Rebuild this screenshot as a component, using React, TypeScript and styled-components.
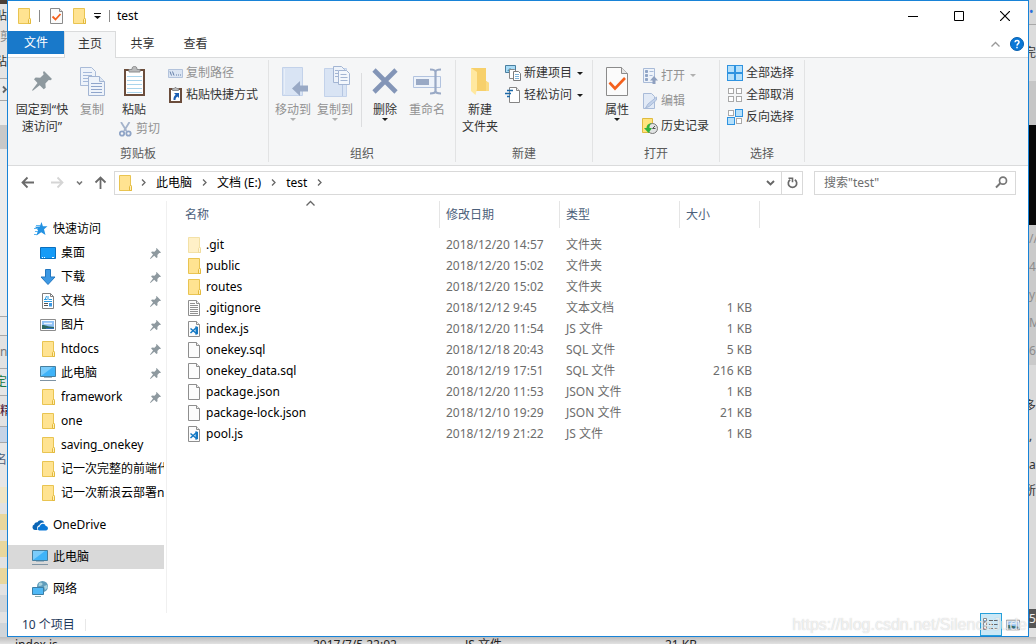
import React from "react";
import styled, { createGlobalStyle } from "styled-components";

const GlobalStyle = createGlobalStyle`
  *, *::before, *::after { box-sizing: border-box; }
  body {
    margin: 0;
    background: #e2e2e2;
    font: 12px/16px "Noto Sans", "Noto Sans CJK SC", sans-serif;
    color: #000;
  }
  button, input {
    font: inherit;
    color: inherit;
    background: none;
    border: 0;
    padding: 0;
    margin: 0;
    border-radius: 0;
  }
  button { white-space: nowrap; }
  svg { display: block; flex: none; }
  ul, ol { list-style: none; margin: 0; padding: 0; }
`;

/* ---------- desktop and the slivers of windows behind ---------- */

const Desktop = styled.div`
  display: grid;
  grid-template-columns: 7px minmax(0, 1fr) 7px;
  grid-template-rows: 1fr 7px;
  min-height: 100vh;
`;

const Sliver = styled.div`
  display: flex;
  flex-direction: column;
  overflow: hidden;
  contain: size;
  background: #e2e2e2;
`;

const Slice = styled.div<{ $h: number; $bg: string; $fg?: string; $line?: boolean; $end?: boolean }>`
  flex: none;
  display: flex;
  align-items: center;
  justify-content: ${(p) => (p.$end ? "flex-end" : "flex-start")};
  height: ${(p) => p.$h}px;
  overflow: hidden;
  white-space: nowrap;
  background: ${(p) => p.$bg};
  color: ${(p) => p.$fg ?? "#333"};
  border-bottom: ${(p) => (p.$line ? "1px solid #a8a8a8" : "0")};
`;

const BottomSliver = styled.div`
  grid-column: 1 / -1;
  display: grid;
  grid-template-columns: 298px 152px 200px 1fr;
  align-items: end;
  padding: 0 15px 3px;
  height: 7px;
  overflow: hidden;
  color: #222;
  background: linear-gradient(#bdbdbd, #e2e2e2);
`;

/* ---------- window frame ---------- */

const Window = styled.main`
  position: relative;
  display: flex;
  flex-direction: column;
  min-width: 0;
  border: 1px solid #1883d7;
  background: #fff;
`;

const TitleBar = styled.header`
  display: flex;
  align-items: center;
  height: 30px;
  padding-left: 10px;
`;

const QuickTools = styled.div`
  display: flex;
  align-items: center;
  gap: 8px;
`;

const QuickSlot = styled.span`
  display: flex;
  justify-content: center;
  width: 17px;
`;

const Bar = styled.span`
  width: 1px;
  height: 12px;
  background: #8a8a8a;
`;

const Title = styled.h1`
  margin: 0 0 0 7px;
  font-size: 12px;
  font-weight: 400;
  line-height: 16px;
`;

const CaptionButtons = styled.div`
  display: flex;
  margin-left: auto;
`;

const CaptionButton = styled.button`
  display: flex;
  align-items: center;
  justify-content: center;
  width: 46px;
  height: 30px;
`;

const TabRow = styled.nav`
  display: flex;
  align-items: flex-start;
  height: 27px;
  border-bottom: 1px solid #dadbdc;
`;

const Tab = styled.button<{ $kind?: "file" | "active" }>`
  width: ${(p) => (p.$kind === "file" ? 56 : p.$kind === "active" ? 52 : 53)}px;
  height: ${(p) => (p.$kind === "file" ? 23 : 27)}px;
  padding-bottom: ${(p) => (p.$kind === "file" ? 0 : 2)}px;
  color: ${(p) => (p.$kind === "file" ? "#fff" : "#333")};
  background: ${(p) => (p.$kind === "file" ? "#1979ca" : p.$kind === "active" ? "#f5f6f7" : "transparent")};
  border: solid #dadbdc;
  border-width: ${(p) => (p.$kind === "active" ? "1px 1px 0" : "0")};
`;

const TabTools = styled.div`
  display: flex;
  align-items: center;
  gap: 10px;
  height: 26px;
  margin-left: auto;
  padding-right: 4px;
`;

/* ---------- ribbon ---------- */

const Ribbon = styled.section`
  display: flex;
  flex: none;
  height: 108px;
  padding: 2px 0 3px;
  overflow: hidden;
  background: #f5f6f7;
  border-bottom: 1px solid #dadbdc;
`;

const Group = styled.section<{ $w: number }>`
  display: flex;
  flex: none;
  flex-direction: column;
  width: ${(p) => p.$w}px;
  border-right: 1px solid #e2e3e4;
`;

const GroupBody = styled.div<{ $pad?: number }>`
  display: flex;
  flex: 1;
  padding-left: ${(p) => p.$pad ?? 0}px;
`;

const GroupLabel = styled.h2`
  margin: 0;
  font-size: 12px;
  font-weight: 400;
  line-height: 16px;
  text-align: center;
  color: #5a5a5a;
`;

const Column = styled.div<{ $pad?: number; $top?: number }>`
  display: flex;
  flex-direction: column;
  align-items: flex-start;
  padding: ${(p) => p.$top ?? 2}px 0 0 ${(p) => p.$pad ?? 0}px;
`;

const BigButton = styled.button<{ $w: number }>`
  display: flex;
  flex-direction: column;
  align-items: center;
  align-self: flex-start;
  width: ${(p) => p.$w}px;
  padding-top: 4px;
  line-height: 17px;
  text-align: center;
  white-space: pre-line;
  color: #333;
  &:disabled { color: #929292; }
`;

const IconBox = styled.span`
  display: flex;
  align-items: center;
  justify-content: center;
  height: 34px;
  margin-bottom: 3px;
`;

const SmallButton = styled.button<{ $h: number }>`
  display: flex;
  align-items: center;
  gap: 3px;
  height: ${(p) => p.$h}px;
  color: #333;
  &:disabled { color: #929292; }
`;

const SmallIcon = styled.span`
  display: flex;
  justify-content: center;
  width: 16px;
`;

const CutRow = styled.div`
  padding-left: 5px;
  height: 22px;
`;

const InnerRule = styled.span`
  width: 1px;
  height: 54px;
  margin: 13px 4px 0 5px;
  background: #dcdddf;
`;

const Caret = styled.span<{ $pale?: boolean }>`
  width: 0;
  height: 0;
  margin: 0 2px;
  border: solid transparent;
  border-width: 3px 3px 0;
  border-top-color: ${(p) => (p.$pale ? "#b0b0b0" : "#1a1a1a")};
`;

/* ---------- address row ---------- */

const AddressRow = styled.div`
  display: flex;
  align-items: center;
  flex: none;
  height: 35px;
  padding: 0 12px 2px 13px;
`;

const NavButtons = styled.div`
  display: grid;
  grid-template-columns: 30px 25px 18px 20px;
  width: 93px;
  align-items: center;
`;

const AddressBox = styled.div`
  display: flex;
  flex: 1;
  align-items: center;
  min-width: 0;
  height: 24px;
  padding-left: 4px;
  border: 1px solid #d9d9d9;
`;

const Crumbs = styled.ol`
  display: flex;
  align-items: center;
  margin-right: auto;
  padding-left: 7px;
  white-space: nowrap;
  li { display: flex; align-items: center; gap: 8px; margin-right: 8px; }
`;

const BoxButton = styled.button<{ $rule?: boolean }>`
  display: flex;
  align-items: center;
  justify-content: center;
  width: 21px;
  height: 22px;
  border-left: ${(p) => (p.$rule ? "1px solid #d9d9d9" : "0")};
`;

const SearchBox = styled.label`
  display: flex;
  align-items: center;
  width: 202px;
  height: 24px;
  margin-left: 11px;
  padding: 0 7px 0 9px;
  border: 1px solid #d9d9d9;
  input { flex: 1; min-width: 0; outline: 0; }
  input::placeholder { color: #6d6d6d; opacity: 1; }
`;

/* ---------- content ---------- */

const Content = styled.div`
  display: grid;
  flex: 1;
  grid-template-columns: 159px minmax(0, 1fr);
`;

const NavPane = styled.nav`
  padding: 16px 2px 0 0;
  border-right: 1px solid #f0f0f0;
`;

const NavGroup = styled.ul`
  margin-bottom: 8px;
`;

const NavItem = styled.li<{ $level?: number; $selected?: boolean }>`
  display: flex;
  align-items: center;
  height: 24px;
  padding-left: ${(p) => (p.$level ? 32 : 24)}px;
  background: ${(p) => (p.$selected ? "#d9d9d9" : "transparent")};
  a {
    display: flex;
    flex: 1;
    align-items: center;
    gap: 5px;
    min-width: 0;
    color: inherit;
    text-decoration: none;
  }
`;

const NavText = styled.span`
  flex: 1;
  overflow: hidden;
  white-space: nowrap;
`;

const PinSlot = styled.span`
  padding-right: 3px;
`;

const FileTable = styled.table`
  align-self: start;
  width: 593px;
  table-layout: fixed;
  border-collapse: collapse;
  color: #6d6d6d;
  th, td { padding: 0; font-weight: 400; text-align: left; white-space: nowrap; }
  td { height: 21px; padding-left: 6px; }
  th { height: 33px; vertical-align: top; }
  td:last-child { padding-right: 8px; text-align: right; }
`;

const HeadCell = styled.div<{ $pad?: number }>`
  position: relative;
  height: 27px;
  padding-left: ${(p) => p.$pad ?? 6}px;
  line-height: 27px;
  color: #4c607a;
  border-right: 1px solid #e5e5e5;
`;

const SortMark = styled.span`
  position: absolute;
  top: -2px;
  left: 51%;
`;

const FileName = styled.span<{ $hidden?: boolean }>`
  display: flex;
  align-items: center;
  gap: 5px;
  padding-left: 15px;
  color: #000;
  svg { opacity: ${(p) => (p.$hidden ? 0.5 : 1)}; }
`;

const StatusBar = styled.footer`
  display: flex;
  align-items: center;
  flex: none;
  height: 23px;
  padding-left: 14px;
  color: #1e395b;
`;

const StatusRule = styled.span`
  width: 1px;
  height: 12px;
  margin-left: 10px;
  background: #e8e8e8;
`;

const ViewButtons = styled.div`
  display: flex;
  margin-left: auto;
  padding-right: 4px;
`;

const ViewButton = styled.button<{ $on?: boolean }>`
  display: flex;
  align-items: center;
  justify-content: center;
  width: 22px;
  height: 23px;
  background: ${(p) => (p.$on ? "#cbe8f6" : "transparent")};
  border: 1px solid ${(p) => (p.$on ? "#26a0da" : "transparent")};
`;

const Watermark = styled.span`
  position: absolute;
  right: 1px;
  bottom: 1px;
  font: 16px/20px "Liberation Sans", sans-serif;
  color: rgba(255, 255, 255, 0.7);
  text-shadow: 0 0 1px rgba(140, 140, 140, 0.5);
  pointer-events: none;
`;

/* ---------- icons ---------- */

const Folder = () => (
  <svg width="13" height="16" viewBox="0 0 13 16" aria-hidden="true">
    <path d="M.5.5h11v9.5l1 1v4.500H.5z" fill="#ffe391" stroke="#e9c451" />
    <path d="M10.500 15.500v-4l1-1.200 1 1.200v4z" fill="#fff0b8" stroke="#e3b93c" />
  </svg>
);

const CheckPage = ({ big }: { big?: boolean }) => (
  <svg width={big ? 22 : 13} height={big ? 29 : 16} viewBox={big ? "0 0 22 29" : "0 0 13 16"} aria-hidden="true">
    {big ? (
      <>
        <path d="M.5.5h15l6 6v22H.5z" fill="#fbfbfb" stroke="#8b8b8b" />
        <path d="M15.500.5v6h6" fill="#e6e6e6" stroke="#8b8b8b" />
        <path d="M3.500 15.500l5.500 6 10-10.500" fill="none" stroke="#f4601c" strokeWidth="2.600" />
      </>
    ) : (
      <>
        <path d="M.5.5h9l3 3v12H.5z" fill="#fbfbfb" stroke="#8b8b8b" />
        <path d="M9.500.5v3h3" fill="#e6e6e6" stroke="#8b8b8b" />
        <path d="M2.500 8.500l3 3 5-5.500" fill="none" stroke="#f4601c" strokeWidth="1.800" />
      </>
    )}
  </svg>
);

const QuickMenu = () => (
  <svg width="7" height="6" viewBox="0 0 7 6" aria-hidden="true">
    <path d="M0 0h7v1H0zM0 3h7L3.500 6z" fill="#111" />
  </svg>
);

const Pin = ({ size }: { size: number }) => (
  <svg width={size} height={size} viewBox="0 0 20 20" aria-hidden="true">
    <path d="M12 0l8 8-1.500 1.200-1.800-.3-3.300 3.600.3 4.200-2 1.600-4-4L.8 19.800 0 19.200l5.500-7.300L2 8.300l1.600-1.800 4.600.2 3.400-3.300L11 1.300z" fill="#8e999f" />
  </svg>
);

const CopyIcon = () => (
  <svg width="25" height="29" viewBox="0 0 25 29" aria-hidden="true">
    <path d="M.5.5h11l4 4v14H.5z" fill="#eef3fa" stroke="#a9bbd8" />
    {[0, 3, 6, 9].map((d) => (
      <path key={d} d={`M3 ${5.5 + d}h9`} stroke="#a5b9da" />
    ))}
    <path d="M8.500 9.500h11l5 5v14h-16z" fill="#eef3fa" stroke="#a3b5d3" />
    <path d="M19.500 9.500v5h5" fill="#dde7f4" stroke="#a3b5d3" />
    {[0, 3, 6, 9].map((d) => (
      <path key={d} d={`M11 ${16.5 + d}h11`} stroke="#8fa5cb" />
    ))}
  </svg>
);

const PasteIcon = () => (
  <svg width="21" height="30" viewBox="0 0 21 30" aria-hidden="true">
    <rect x="1" y="4" width="19" height="25" fill="#fff" stroke="#6b4d3c" strokeWidth="2" />
    <path d="M5 6V3.500h3C8 1 9 .5 10.500.5S13 1 13 3.500h3V6z" fill="#b9babb" stroke="#8c8d8e" />
    {[10, 14, 18, 22, 26].map((y) => (
      <path key={y} d={`M3 ${y}.5h15`} stroke="#a9d4ec" />
    ))}
  </svg>
);

const CutIcon = () => (
  <svg width="13" height="15" viewBox="0 0 13 15" aria-hidden="true">
    <path d="M2 0l5.500 9M10.500 0L5 9" stroke="#a4b3cb" strokeWidth="1.800" />
    <circle cx="3" cy="11.500" r="2.200" fill="none" stroke="#8fa4c6" strokeWidth="1.800" />
    <circle cx="9.500" cy="11.500" r="2.200" fill="none" stroke="#8fa4c6" strokeWidth="1.800" />
  </svg>
);

const PathIcon = () => (
  <svg width="15" height="9" viewBox="0 0 15 9" aria-hidden="true">
    <path d="M.5.5h14v8H.5z" fill="#dbe5f3" stroke="#b3c3dc" />
    <path d="M2 2.500l1.500 4M4.500 2.500l1.500 4M8 6h1M10 6h1M12 6h1" stroke="#6580aa" />
  </svg>
);

const ShortcutIcon = () => (
  <svg width="13" height="16" viewBox="0 0 13 16" aria-hidden="true">
    <rect x="1" y="2" width="11" height="13" fill="#fff" stroke="#6b4d3c" strokeWidth="2" />
    <path d="M3.500 3.500v-2h1.500L6 .5h1l1 1h1.500v2z" fill="#b9babb" stroke="#8c8d8e" />
    <path d="M5 6h5v5L8.400 9.400C7 10.300 6.500 11.500 6.500 13H4.500c-.2-2.200.5-4 2.200-5.300z" fill="#1a5fb4" />
  </svg>
);

const MoveToIcon = () => (
  <svg width="30" height="29" viewBox="-4 0 30 29" aria-hidden="true">
    <path d="M.5.5h20v28H.5z" fill="#d9e4f4" stroke="#c3d2ea" />
    <path d="M2.500 2v25" stroke="#e8eff9" />
    <path d="M10 21.500l8-7.500v4.500h8v6h-8V29z" fill="#99a9c5" />
  </svg>
);

const CopyToIcon = () => (
  <svg width="30" height="31" viewBox="-4 0 30 31" aria-hidden="true">
    <path d="M.5 2.500h22v28H.5z" fill="#d9e4f4" stroke="#c3d2ea" />
    <path d="M18.500 18v12" stroke="#b5c6e2" />
    <path d="M9.500.5h8l3 3v13h-11z" fill="#eef3fa" stroke="#a3b5d3" />
    <path d="M14.500 4.500h8l3 3v11h-11z" fill="#f3f7fc" stroke="#a3b5d3" />
    <path d="M11 4.500h3M11 7.500h3M11 10.500h3M16.500 8.500h6M16.500 11.500h7M16.500 14.500h7" stroke="#a3b5d3" />
  </svg>
);

const DeleteIcon = () => (
  <svg width="26" height="26" viewBox="0 0 26 26" aria-hidden="true">
    <path d="M2 2l22 22M24 2L2 24" stroke="#8395b7" strokeWidth="4.600" />
  </svg>
);

const RenameIcon = () => (
  <svg width="28" height="27" viewBox="0 0 28 27" aria-hidden="true">
    <path d="M.5 8.500h27v11H.5z" fill="#eef3fa" stroke="#b2c3df" />
    <path d="M3 11h13v6H3z" fill="#99a9c5" />
    <path d="M17 1.500c3 0 5.500.5 5.500 2.500v19c0 2-2.500 2.500-5.500 2.500M28 1.500c-3 0-5.500.5-5.500 2.500v19c0 2 2.500 2.500 5.500 2.500" fill="none" stroke="#99a9c5" strokeWidth="2.200" />
  </svg>
);

const NewFolderIcon = () => (
  <svg width="20" height="28" viewBox="0 0 20 28" aria-hidden="true">
    <path d="M1 1h15v13l3 2v8H1z" fill="#f7d06b" />
    <path d="M1 1l6 4v17l-1.500 6L1 24z" fill="#ffe89f" />
    <path d="M16 14l3 2v8h-3z" fill="#fbdc84" />
  </svg>
);

const NewItemIcon = () => (
  <svg width="16" height="16" viewBox="0 0 16 16" aria-hidden="true">
    <path d="M.5.5h10v7H.5z" fill="#a9dcf7" stroke="#4a7f9f" />
    <path d="M2 6l3-3 4 4z" fill="#4c96b8" />
    <path d="M4.500 4.500h5l2 2v7h-7z" fill="#fff" stroke="#888" />
    <path d="M8.500 6.500h5l2 2v7h-7z" fill="#fff" stroke="#7d7d7d" />
    <path d="M10 9.500h4M10 11.500h4M10 13.500h4" stroke="#7fb4d8" />
  </svg>
);

const EasyIcon = () => (
  <svg width="16" height="16" viewBox="0 0 16 16" aria-hidden="true">
    <path d="M4.500.5h7l3 3v12h-10z" fill="#fff" stroke="#858585" />
    <path d="M11.500.5v3h3" fill="#eee" stroke="#858585" />
    <path d="M2 3.500h6M0 6.500h6M2 9.500h3" stroke="#1967a8" strokeWidth="1.400" />
  </svg>
);

const OpenIcon = () => (
  <svg width="15" height="16" viewBox="0 0 15 16" aria-hidden="true">
    <path d="M.5.5h11v14H.5z" fill="#eef3fa" stroke="#a9bbd8" />
    <path d="M2.500 2.500h2v2h-2zM2.500 6.500h2v2h-2zM2.500 10.500h2v2h-2z" fill="#8fa4c6" stroke="#8fa4c6" />
    <path d="M6.500 3.500h4M6.500 7.500h3" stroke="#a9bbd8" />
    <path d="M11 8l4 4.500h-2.500V16h-3v-3.500H7z" fill="#8fa0bf" />
  </svg>
);

const EditIcon = () => (
  <svg width="14" height="16" viewBox="0 0 14 16" aria-hidden="true">
    <path d="M.5.5h8l3 3v12H.5z" fill="#e2eaf6" stroke="#a9bbd8" />
    <path d="M13.500 4L5 11l-2.500 4 4-1.700 7-6.300z" fill="#c3d2ea" stroke="#a9bbd8" />
  </svg>
);

const HistoryIcon = () => (
  <svg width="16" height="16" viewBox="0 0 16 16" aria-hidden="true">
    <path d="M.5.5h10v14H.5z" fill="#ffe37d" stroke="#dfbb3f" />
    <circle cx="10.500" cy="10.500" r="5" fill="#e1e3e4" stroke="#777" />
    <path d="M10.500 10.500L13 8M10.500 10.500h3" stroke="#555" />
    <path d="M9.500 5C6 5.500 4.500 7.500 4.500 10H2l4.500 5 3.500-5H7.500C7.500 8 8 6.500 9.500 5z" fill="#31b13a" />
  </svg>
);

const SelectIcon = ({ on }: { on: boolean[] }) => (
  <svg width="16" height="16" viewBox="0 0 16 16" aria-hidden="true">
    {on.map((lit, i) => {
      const x = (i % 2) * 8;
      const y = i > 1 ? 8 : 0;
      return lit ? (
        <rect key={i} x={x + 0.5} y={y + 0.5} width="7" height="7" fill="#b5e0fb" stroke="#2f93e0" />
      ) : (
        <rect key={i} x={x + 1.5} y={y + 1.5} width="5" height="5" fill="#fff" stroke="#a9a9a9" />
      );
    })}
  </svg>
);

const Arrow = ({ dir, pale }: { dir: "left" | "right" | "up"; pale?: boolean }) => {
  const turn = { left: 0, up: 90, right: 180 }[dir];
  return (
    <svg width="13" height="13" viewBox="0 0 13 13" aria-hidden="true">
      <path d="M13 6.500H1.500M6.500 1.500l-5 5 5 5" fill="none" stroke={pale ? "#d5d5d5" : "#6a6a6a"} strokeWidth="1.800" transform={`rotate(${turn} 6.500 6.500)`} />
    </svg>
  );
};

const Chevron = ({ dir, color = "#666", wide }: { dir: "right" | "down" | "up"; color?: string; wide?: boolean }) => {
  const d = { right: "M3 1.500L6 4.500 3 7.500", down: "M1 3l3.500 3.500L8 3", up: "M.5 6.500l4-4 4 4" }[dir];
  return (
    <svg width="9" height="9" viewBox="0 0 9 9" aria-hidden="true">
      <path d={d} fill="none" stroke={color} strokeWidth={wide ? 1.9 : 1.3} />
    </svg>
  );
};

const SmallChevron = () => (
  <svg width="7" height="7" viewBox="0 0 7 7" aria-hidden="true">
    <path d="M1 2.500L3.500 5 6 2.500" fill="none" stroke="#777" strokeWidth="1.600" />
  </svg>
);

const RefreshIcon = () => (
  <svg width="11" height="12" viewBox="0 0 11 12" aria-hidden="true">
    <path d="M7.800 2.700A4.200 4.200 0 1 1 3.200 2.700" fill="none" stroke="#6a6a6a" strokeWidth="1.700" />
    <path d="M1.500 1.300h4v4" fill="none" stroke="#6a6a6a" strokeWidth="1.600" />
  </svg>
);

const SearchIcon = () => (
  <svg width="13" height="13" viewBox="0 0 13 13" aria-hidden="true">
    <circle cx="8" cy="4.700" r="3.500" fill="none" stroke="#777" strokeWidth="1.700" />
    <path d="M5.500 7L1 11.500" stroke="#777" strokeWidth="2" />
  </svg>
);

const StarIcon = () => (
  <svg width="16" height="16" viewBox="0 0 16 16" aria-hidden="true">
    <path d="M9.500 1l1.400 4.200 4.600.1-3.500 3 1.500 5.700-4.300-2.700L4.500 14.500 6 9.300 3 5.700l4.800-.3z" fill="#2492e2" />
    <path d="M4 4.500h4M2 7.500h4M3 10.500h3M2 13.500h3" stroke="#5db5f0" />
  </svg>
);

const DesktopIcon = () => (
  <svg width="16" height="16" viewBox="0 0 16 16" aria-hidden="true">
    <path d="M.5 2.500h15v11H.5z" fill="#159bf7" stroke="#0b6fbd" />
    <path d="M2 12.500h1M4 12.500h1M12 12.500h2" stroke="#fff" />
  </svg>
);

const DownloadIcon = () => (
  <svg width="16" height="16" viewBox="0 0 16 16" aria-hidden="true">
    <path d="M5.500.5h5v7.500h4.500L8 15.500 1 8h4.500z" fill="#3c98e3" stroke="#2277c0" />
  </svg>
);

const DocIcon = () => (
  <svg width="16" height="16" viewBox="0 0 16 16" aria-hidden="true">
    <path d="M2.500.5h8l3 3v12h-11z" fill="#fff" stroke="#808080" />
    <path d="M10.500.5v3h3" fill="none" stroke="#808080" />
    <path d="M4 6.500h3M4 8.500h8M9 6.500h3" stroke="#2c9be0" />
    <path d="M4 10.500h4M4 12.500h4" stroke="#555" />
    <path d="M9 10h3v3.500H9z" fill="#3c98e3" />
    <path d="M6.500 3l-1.500 4M8 3v4" stroke="#2c9be0" />
  </svg>
);

const Photo = ({ w, h }: { w: number; h: number }) => (
  <svg width={w} height={h} viewBox="0 0 16 12" aria-hidden="true">
    <path d="M.5.5h15v11H.5z" fill="#fff" stroke="#8c8c8c" />
    <path d="M2 2h12v8H2z" fill="#8fc1f5" />
    <path d="M4 4.500h8" stroke="#e8f3fe" strokeWidth="1.500" />
    <path d="M2 6c3-.5 4 1.500 12 2v2H2z" fill="#2d6a63" />
    <path d="M6 9h8v1H6z" fill="#2f6fb8" />
  </svg>
);

const PcIcon = () => (
  <svg width="16" height="16" viewBox="0 0 16 16" aria-hidden="true">
    <path d="M.5 1.500h15v10H.5z" fill="#3fb3f8" stroke="#477f9f" />
    <path d="M1 11V2h12z" fill="#7accfb" />
    <path d="M4 12.500h8" stroke="#9fb4c2" />
    <path d="M0 15.500h16" stroke="#7e93a3" />
  </svg>
);

const CloudIcon = () => (
  <svg width="16" height="16" viewBox="0 0 16 16" aria-hidden="true">
    <path d="M5.500 13H2.800A2.800 2.800 0 0 1 2.300 7.600C2.500 5.500 4.500 5 5.500 5.300 6.500 3 10.500 2.200 12.300 5.600c-2.500-.5-4.500.8-5 2.700C5.500 8.500 4.500 10.500 5.500 13z" fill="#0a64b4" />
    <path d="M7.300 13.500c-2-.3-2-3.700.6-3.900.4-3.400 5-3.700 5.800-.6 3 .3 2.900 4.200.3 4.500z" fill="#0a78d7" />
  </svg>
);

const NetworkIcon = () => (
  <svg width="16" height="16" viewBox="0 0 16 16" aria-hidden="true">
    <circle cx="10.500" cy="5.500" r="5.500" fill="#5f9dbb" />
    <path d="M7 2c2-1.500 4 0 3.500 1.500S8 5 6.500 5zM12 5l3-1 .8 2.500L13 9z" fill="#a9d2de" />
    <path d="M.5 6.500h11v7H.5z" fill="#4fb8f5" stroke="#3c7ea5" />
    <path d="M3 15.500h6" stroke="#8aa" />
  </svg>
);

type PageKind = "blank" | "text" | "code";

const PageIcon = ({ kind }: { kind: PageKind }) => (
  <svg width="13" height="16" viewBox="0 0 13 16" aria-hidden="true">
    <path d="M.5.5h8l3 3v12H.5z" fill="#fcfcfc" stroke="#8e8e8e" />
    <path d="M8.500.5v3h3" fill="#efefef" stroke="#8e8e8e" />
    {kind === "text" && <path d="M2 3.500h5M2 5.500h8M2 7.500h8M2 9.500h8M2 11.500h8M2 13.500h8" stroke="#8f8f8f" />}
    {kind === "code" && (
      <>
        <path d="M7.500 5l2.500 1v7l-2.500 1z" fill="#1479c4" />
        <path d="M8.500 6.500L2.500 12M8.500 12.500l-6-5" stroke="#1479c4" strokeWidth="1.500" />
      </>
    )}
  </svg>
);

const DetailsIcon = () => (
  <svg width="16" height="13" viewBox="0 0 16 13" aria-hidden="true">
    <path d="M.5.5h3v3h-3zM.5 4.500h3v3h-3zM.5 8.500h3v3h-3z" fill="#fff" stroke="#8a8a8a" />
    <path d="M6 2.500h4M11 2.500h4M6 6.500h4M11 6.500h4M6 10.500h4M11 10.500h4" stroke="#666" />
    <path d="M1.500 10.500h1" stroke="#d33" />
    <path d="M1.500 2.500h1" stroke="#27c" />
  </svg>
);

/* ---------- data ---------- */

type NavEntry = { label: string; icon: React.ReactNode; level?: number; pinned?: boolean; selected?: boolean };

const slotFolder = (
  <SmallIcon>
    <Folder />
  </SmallIcon>
);

const navGroups: NavEntry[][] = [
  [
    { label: "快速访问", icon: <StarIcon /> },
    { label: "桌面", icon: <DesktopIcon />, level: 1, pinned: true },
    { label: "下载", icon: <DownloadIcon />, level: 1, pinned: true },
    { label: "文档", icon: <DocIcon />, level: 1, pinned: true },
    { label: "图片", icon: <Photo w={16} h={12} />, level: 1, pinned: true },
    { label: "htdocs", icon: slotFolder, level: 1, pinned: true },
    { label: "此电脑", icon: <PcIcon />, level: 1, pinned: true },
    { label: "framework", icon: slotFolder, level: 1, pinned: true },
    { label: "one", icon: slotFolder, level: 1 },
    { label: "saving_onekey", icon: slotFolder, level: 1 },
    { label: "记一次完整的前端代码部署", icon: slotFolder, level: 1 },
    { label: "记一次新浪云部署node", icon: slotFolder, level: 1 },
  ],
  [{ label: "OneDrive", icon: <CloudIcon /> }],
  [{ label: "此电脑", icon: <PcIcon />, selected: true }],
  [{ label: "网络", icon: <NetworkIcon /> }],
];

type FileEntry = { name: string; date: string; type: string; size?: string; kind: PageKind | "folder"; hidden?: boolean };

const files: FileEntry[] = [
  { name: ".git", date: "2018/12/20 14:57", type: "文件夹", kind: "folder", hidden: true },
  { name: "public", date: "2018/12/20 15:02", type: "文件夹", kind: "folder" },
  { name: "routes", date: "2018/12/20 15:02", type: "文件夹", kind: "folder" },
  { name: ".gitignore", date: "2018/12/12 9:45", type: "文本文档", size: "1 KB", kind: "text" },
  { name: "index.js", date: "2018/12/20 11:54", type: "JS 文件", size: "1 KB", kind: "code" },
  { name: "onekey.sql", date: "2018/12/18 20:43", type: "SQL 文件", size: "5 KB", kind: "blank" },
  { name: "onekey_data.sql", date: "2018/12/19 17:51", type: "SQL 文件", size: "216 KB", kind: "blank" },
  { name: "package.json", date: "2018/12/20 11:53", type: "JSON 文件", size: "1 KB", kind: "blank" },
  { name: "package-lock.json", date: "2018/12/10 19:29", type: "JSON 文件", size: "21 KB", kind: "blank" },
  { name: "pool.js", date: "2018/12/19 21:22", type: "JS 文件", size: "1 KB", kind: "code" },
];

/* ---------- parts ---------- */

type BigProps = { icon: React.ReactNode; label: string; w: number; disabled?: boolean; menu?: boolean };

const Big = ({ icon, label, w, disabled, menu }: BigProps) => (
  <BigButton $w={w} disabled={disabled}>
    <IconBox>{icon}</IconBox>
    <span>{label}</span>
    {menu && <Caret $pale={disabled} />}
  </BigButton>
);

type SmallProps = { icon: React.ReactNode; label: string; h: number; disabled?: boolean; menu?: boolean };

const Small = ({ icon, label, h, disabled, menu }: SmallProps) => (
  <SmallButton $h={h} disabled={disabled}>
    <SmallIcon>{icon}</SmallIcon>
    <span>{label}</span>
    {menu && <Caret $pale={disabled} />}
  </SmallButton>
);

const RibbonBar = () => (
  <Ribbon>
    <Group $w={261}>
      <GroupBody $pad={4}>
        <Big w={60} icon={<Pin size={20} />} label={"固定到“快\n速访问”"} />
        <Big w={40} icon={<CopyIcon />} label="复制" disabled />
        <Column $top={0}>
          <Big w={44} icon={<PasteIcon />} label="粘贴" />
          <CutRow>
            <Small h={22} icon={<CutIcon />} label="剪切" disabled />
          </CutRow>
        </Column>
        <Column $pad={7}>
          <Small h={22} icon={<PathIcon />} label="复制路径" disabled />
          <Small h={22} icon={<ShortcutIcon />} label="粘贴快捷方式" />
        </Column>
      </GroupBody>
      <GroupLabel>剪贴板</GroupLabel>
    </Group>
    <Group $w={187}>
      <GroupBody $pad={3}>
        <Big w={42} icon={<MoveToIcon />} label="移动到" disabled menu />
        <Big w={42} icon={<CopyToIcon />} label="复制到" disabled menu />
        <InnerRule />
        <Big w={38} icon={<DeleteIcon />} label="删除" menu />
        <Big w={46} icon={<RenameIcon />} label="重命名" disabled />
      </GroupBody>
      <GroupLabel>组织</GroupLabel>
    </Group>
    <Group $w={137}>
      <GroupBody>
        <Big w={48} icon={<NewFolderIcon />} label={"新建\n文件夹"} />
        <Column $pad={1}>
          <Small h={22} icon={<NewItemIcon />} label="新建项目" menu />
          <Small h={22} icon={<EasyIcon />} label="轻松访问" menu />
        </Column>
      </GroupBody>
      <GroupLabel>新建</GroupLabel>
    </Group>
    <Group $w={127}>
      <GroupBody>
        <Big w={48} icon={<CheckPage big />} label="属性" menu />
        <Column $pad={1} $top={3}>
          <Small h={25} icon={<OpenIcon />} label="打开" disabled menu />
          <Small h={25} icon={<EditIcon />} label="编辑" disabled />
          <Small h={25} icon={<HistoryIcon />} label="历史记录" />
        </Column>
      </GroupBody>
      <GroupLabel>打开</GroupLabel>
    </Group>
    <Group $w={85}>
      <GroupBody>
        <Column $pad={7}>
          <Small h={22} icon={<SelectIcon on={[true, true, true, true]} />} label="全部选择" />
          <Small h={22} icon={<SelectIcon on={[false, false, false, false]} />} label="全部取消" />
          <Small h={22} icon={<SelectIcon on={[false, true, true, false]} />} label="反向选择" />
        </Column>
      </GroupBody>
      <GroupLabel>选择</GroupLabel>
    </Group>
  </Ribbon>
);

const LeftSliver = () => (
  <Sliver aria-hidden="true">
    <Slice $h={4} $bg="#4b4038" />
    <Slice $h={23} $bg="#e4e4e4" $end>贴</Slice>
    <Slice $h={19} $bg="#e4e4e4" $fg="#8a8a8a">剪</Slice>
    <Slice $h={33} $bg="#e4e4e4" $end $line>粘</Slice>
    <Slice $h={22} $bg="#eaeaea" $line>
      <Chevron dir="right" wide />
    </Slice>
    <Slice $h={24} $bg="#ececec" />
    <Slice $h={24} $bg="#c8c8c8" />
    <Slice $h={168} $bg="#ececec" $line />
    <Slice $h={19} $bg="#e8e8e8" $line />
    <Slice $h={33} $bg="#e2e2e2" $fg="#777" $line>n</Slice>
    <Slice $h={27} $bg="#e6e6e6" $fg="#1e7a45" $end $line>定</Slice>
    <Slice $h={31} $bg="#e2e2e2" $fg="#4a1030" $line>精</Slice>
    <Slice $h={16} $bg="#c5d3e6" $line />
    <Slice $h={34} $bg="#e6e6e6" $fg="#4c607a" $end>名</Slice>
    <Slice $h={10} $bg="#e6e6e6" />
    {["#eee5c6", "#e8d79e", "#e8d79e", "#e8d79e"].map((c, i) => (
      <React.Fragment key={i}>
        <Slice $h={16} $bg={c} />
        <Slice $h={11} $bg="#e2e2e2" />
      </React.Fragment>
    ))}
    <Slice $h={17} $bg="#d0d5d9" />
    <Slice $h={11} $bg="#e2e2e2" />
    <Slice $h={14} $bg="#d0d5d9" />
  </Sliver>
);

const RightSliver = () => (
  <Sliver aria-hidden="true">
    <Slice $h={25} $bg="#d8d8d8" $fg="#2a6fdc" $line>•</Slice>
    <Slice $h={56} $bg="#dcdcdc" $end>完</Slice>
    <Slice $h={44} $bg="#c6c6c6" />
    <Slice $h={100} $bg="#080808" />
    {["//", "4", "yp", "M", "6"].map((t) => (
      <Slice key={t} $h={28} $bg="#cacaca" $fg="#8c8c8c">{t}</Slice>
    ))}
    <Slice $h={26} $bg="#dadada" />
    <Slice $h={30} $bg="#dadada" $end>多</Slice>
    <Slice $h={30} $bg="#dadada">,</Slice>
    <Slice $h={28} $bg="#dadada">a</Slice>
    <Slice $h={24} $bg="#dadada" $end>所</Slice>
    <Slice $h={106} $bg="#dadada" />
    <Slice $h={19} $bg="#555" $fg="#eee">5,</Slice>
  </Sliver>
);

export default function App() {
  return (
    <>
      <GlobalStyle />
      <Desktop>
        <LeftSliver />
        <Window>
          <TitleBar>
            <QuickTools>
              <Folder />
              <Bar />
              <button aria-label="属性">
                <QuickSlot>
                  <CheckPage />
                </QuickSlot>
              </button>
              <button aria-label="新建文件夹">
                <Folder />
              </button>
              <button aria-label="自定义快速访问工具栏">
                <QuickMenu />
              </button>
              <Bar />
            </QuickTools>
            <Title>test</Title>
            <CaptionButtons>
              <CaptionButton aria-label="最小化">
                <svg width="10" height="10" viewBox="0 0 10 10"><path d="M0 5.500h10" stroke="#000" /></svg>
              </CaptionButton>
              <CaptionButton aria-label="最大化">
                <svg width="10" height="10" viewBox="0 0 10 10"><path d="M.5.5h9v9h-9z" fill="none" stroke="#000" /></svg>
              </CaptionButton>
              <CaptionButton aria-label="关闭">
                <svg width="10" height="10" viewBox="0 0 10 10"><path d="M0 0l10 10M10 0L0 10" stroke="#000" strokeWidth="1.200" /></svg>
              </CaptionButton>
            </CaptionButtons>
          </TitleBar>

          <TabRow>
            <Tab $kind="file">文件</Tab>
            <Tab $kind="active">主页</Tab>
            <Tab>共享</Tab>
            <Tab>查看</Tab>
            <TabTools>
              <button aria-label="最小化功能区">
                <Chevron dir="up" color="#999" />
              </button>
              <button aria-label="帮助">
                <svg width="14" height="14" viewBox="0 0 14 14">
                  <circle cx="7" cy="7" r="6.500" fill="#0a78d7" stroke="#075fae" />
                  <path d="M5 5.200c.2-2.400 4.100-2.300 4 0C9 6.600 7.100 6.600 7 8.600M7 9.800v1.500" fill="none" stroke="#fff" strokeWidth="1.500" />
                </svg>
              </button>
            </TabTools>
          </TabRow>

          <RibbonBar />

          <AddressRow>
            <NavButtons>
              <button aria-label="后退"><Arrow dir="left" /></button>
              <button aria-label="前进"><Arrow dir="right" pale /></button>
              <button aria-label="最近浏览的位置"><SmallChevron /></button>
              <button aria-label="上移"><Arrow dir="up" /></button>
            </NavButtons>
            <AddressBox>
              <Folder />
              <Crumbs>
                <li><Chevron dir="right" /></li>
                {["此电脑", "文档 (E:)", "test"].map((c) => (
                  <li key={c}>
                    <button>{c}</button>
                    <Chevron dir="right" />
                  </li>
                ))}
              </Crumbs>
              <BoxButton aria-label="以前的位置"><Chevron dir="down" wide /></BoxButton>
              <BoxButton $rule aria-label="刷新"><RefreshIcon /></BoxButton>
            </AddressBox>
            <SearchBox>
              <input type="text" aria-label="搜索" placeholder={'搜索"test"'} />
              <SearchIcon />
            </SearchBox>
          </AddressRow>

          <Content>
            <NavPane>
              {navGroups.map((group, g) => (
                <NavGroup key={g}>
                  {group.map((n) => (
                    <NavItem key={n.label} $level={n.level} $selected={n.selected}>
                      <a href="#">
                        {n.icon}
                        <NavText>{n.label}</NavText>
                        {n.pinned && (
                          <PinSlot>
                            <Pin size={11} />
                          </PinSlot>
                        )}
                      </a>
                    </NavItem>
                  ))}
                </NavGroup>
              ))}
            </NavPane>
            <FileTable>
              <colgroup>
                <col width="273" />
                <col width="120" />
                <col width="120" />
                <col width="80" />
              </colgroup>
              <thead>
                <tr>
                  <th>
                    <HeadCell $pad={18}>
                      名称
                      <SortMark>
                        <Chevron dir="up" />
                      </SortMark>
                    </HeadCell>
                  </th>
                  <th><HeadCell>修改日期</HeadCell></th>
                  <th><HeadCell>类型</HeadCell></th>
                  <th><HeadCell>大小</HeadCell></th>
                </tr>
              </thead>
              <tbody>
                {files.map((f) => (
                  <tr key={f.name}>
                    <td>
                      <FileName $hidden={f.hidden}>
                        {f.kind === "folder" ? <Folder /> : <PageIcon kind={f.kind} />}
                        {f.name}
                      </FileName>
                    </td>
                    <td>{f.date}</td>
                    <td>{f.type}</td>
                    <td>{f.size}</td>
                  </tr>
                ))}
              </tbody>
            </FileTable>
          </Content>

          <StatusBar>
            10 个项目
            <StatusRule />
            <ViewButtons>
              <ViewButton $on aria-label="详细信息"><DetailsIcon /></ViewButton>
              <ViewButton aria-label="大图标"><Photo w={14} h={12} /></ViewButton>
            </ViewButtons>
          </StatusBar>
          <Watermark>https://blog.csdn.net/SilenceJude</Watermark>
        </Window>
        <RightSliver />
        <BottomSliver aria-hidden="true">
          <span>index.js</span>
          <span>2017/7/5 22:02</span>
          <span>JS 文件</span>
          <span>21 KB</span>
        </BottomSliver>
      </Desktop>
    </>
  );
}
